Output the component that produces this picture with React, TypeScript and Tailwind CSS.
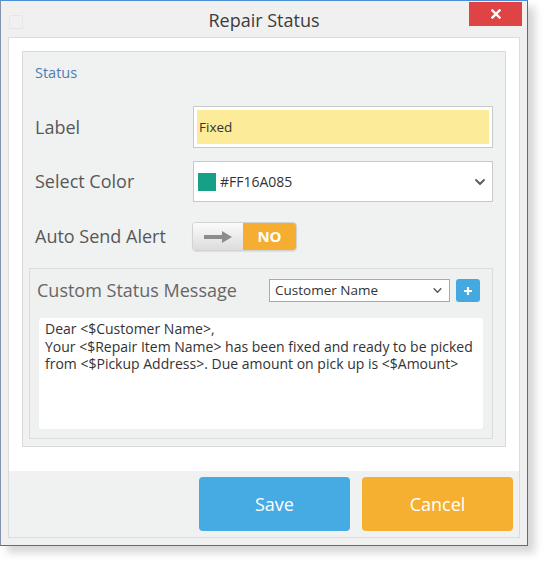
import React from "react";

function Chevron({ className }: { className?: string }) {
  return (
    <svg viewBox="0 0 10 6" className={className} fill="none">
      <polyline points="1,1 5,5 9,1" stroke="#5a5a5a" strokeWidth="1.8" strokeLinecap="round" strokeLinejoin="round" />
    </svg>
  );
}

export default function App() {
  return (
    <div className="min-h-[563px] w-[553px] bg-white font-['Open_Sans',sans-serif]">
      <div className="flex h-[546px] w-[528px] flex-col border border-t-[#4a8fd6] border-l-[#8093a8] border-r-[#6a6a6a] border-b-[#6a6a6a] bg-[#f0f0f0] shadow-[7px_7px_8px_rgba(0,0,0,0.16)]">
        {/* Title bar */}
        <div className="grid h-[36px] grid-cols-[1fr_auto_1fr]">
          <div className="flex items-start pl-[8px] pt-[14px]">
            <div className="h-[14px] w-[14px] rounded-[2px] border border-[#e6e6e6]" />
          </div>
          <div className="pt-[7px] text-[18px] leading-[24px] text-[#3c3c3c]">Repair Status</div>
          <div className="flex items-start justify-end pr-[5px] pt-[1px]">
            <div className="flex h-[24px] w-[53px] items-center justify-center bg-[#e04343]">
              <svg viewBox="0 0 10 10" className="h-[10px] w-[10px]">
                <path d="M1.5 1.5 L8.5 8.5 M8.5 1.5 L1.5 8.5" stroke="white" strokeWidth="2.4" strokeLinecap="square" />
              </svg>
            </div>
          </div>
        </div>

        {/* Content card */}
        <div className="mx-[7px] mb-[7px] flex flex-1 flex-col border border-[#dcdcdc] bg-white">
          <div className="flex flex-1 flex-col px-[13px] pt-[13px]">
            {/* Status group */}
            <div className="flex h-[396px] flex-col border border-[#dadada] bg-[#f0f1f1] pl-[6px] pr-[12px] pb-[7px]">
              <div className="pl-[6px] pt-[11px] text-[14.5px] leading-[20px] text-[#4a7db6]">Status</div>

              {/* Label row */}
              <div className="mt-[23px] flex items-center">
                <div className="w-[164px] pl-[6px] text-[18px] text-[#585858]">Label</div>
                <div className="flex h-[42px] flex-1 border border-[#c9c9c9] bg-white p-[3px]">
                  <div className="flex flex-1 items-center bg-[#fcec9a] pl-[2px] text-[13.5px] text-[#333]">Fixed</div>
                </div>
              </div>

              {/* Select Color row */}
              <div className="mt-[13px] flex items-center">
                <div className="w-[164px] pl-[6px] text-[18px] text-[#585858]">Select Color</div>
                <div className="flex h-[41px] flex-1 items-center border border-[#c9c9c9] bg-white pl-[4px] pr-[7px]">
                  <div className="h-[18px] w-[18px] bg-[#16a085]" />
                  <div className="ml-[4px] flex-1 text-[14px] text-[#333]">#FF16A085</div>
                  <Chevron className="h-[6px] w-[10px]" />
                </div>
              </div>

              {/* Auto Send Alert row */}
              <div className="mt-[20px] flex items-center">
                <div className="w-[163px] pl-[6px] text-[18px] text-[#585858]">Auto Send Alert</div>
                <div className="flex h-[29px] w-[105px] overflow-hidden rounded-[4px] border border-[#d2d2d2] shadow-[0_1px_1px_rgba(0,0,0,0.08)]">
                  <div className="flex w-[50px] items-center justify-center bg-gradient-to-b from-[#fbfbfb] to-[#dcdcdc]">
                    <svg viewBox="0 0 30 14" className="h-[14px] w-[30px]">
                      <path d="M1 5 H19 V1 L29 7 L19 13 V9 H1 Z" fill="#8c8c8c" />
                    </svg>
                  </div>
                  <div className="flex flex-1 items-center justify-center bg-[#f5ae31] text-[15px] font-bold text-white">NO</div>
                </div>
              </div>

              {/* Custom status message section */}
              <div className="mt-[17px] flex flex-1 flex-col border border-[#dcdcdc] bg-[#eff0f0] px-[9px] pb-[9px]">
                <div className="flex items-center pt-[8px]">
                  <div className="-ml-[2px] flex-1 text-[18px] text-[#666]">Custom Status Message</div>
                  <div className="flex h-[23px] w-[181px] items-center border border-[#a9a9a9] bg-white pl-[5px] pr-[7px]">
                    <div className="flex-1 text-[13.5px] leading-none text-[#333]">Customer Name</div>
                    <Chevron className="h-[5px] w-[9px]" />
                  </div>
                  <div className="ml-[6px] mr-[3px] flex h-[23px] w-[24px] items-center justify-center rounded-[3px] bg-[#45a9e1]">
                    <svg viewBox="0 0 10 10" className="h-[10px] w-[10px]">
                      <path d="M5 1 V9 M1 5 H9" stroke="white" strokeWidth="2.2" />
                    </svg>
                  </div>
                </div>
                <div className="mt-[14px] flex-1 whitespace-nowrap rounded-[3px] bg-white px-[6px] pt-[2px] text-[14px] leading-[17.5px] text-[#333]">
                  Dear &lt;$Customer Name&gt;,
                  <br />
                  Your &lt;$Repair Item Name&gt; has been fixed and ready to be picked
                  <br />
                  from &lt;$Pickup Address&gt;. Due amount on pick up is &lt;$Amount&gt;
                </div>
              </div>
            </div>
          </div>

          {/* Footer */}
          <div className="flex h-[66px] justify-end gap-[12px] bg-[#f0f1f1] pr-[6px] pt-[6px]">
            <button className="h-[54px] w-[151px] rounded-[4px] bg-[#47abe3] text-[18px] text-white">Save</button>
            <button className="h-[54px] w-[151px] rounded-[4px] bg-[#f5b032] text-[18px] text-white">Cancel</button>
          </div>
        </div>
      </div>
    </div>
  );
}
